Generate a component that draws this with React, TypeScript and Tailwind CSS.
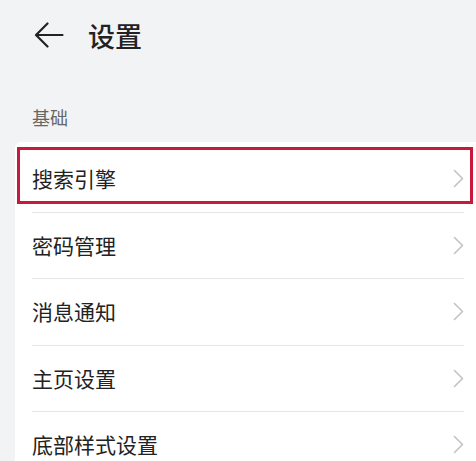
import React from 'react';

const items = ['搜索引擎', '密码管理', '消息通知', '主页设置', '底部样式设置'];

const Chevron = () => (
  <svg width="11" height="19" viewBox="0 0 11 19" fill="none">
    <polyline points="1.5,1.5 9.5,9.5 1.5,17.5" stroke="#c2c2c2" strokeWidth="1.6" strokeLinecap="round" strokeLinejoin="round" />
  </svg>
);

const BackArrow = () => (
  <svg width="30" height="26" viewBox="0 0 30 26" fill="none">
    <path d="M28.5 13H2.5M13.5 1.5L2 13l11.5 11.5" stroke="#222" strokeWidth="2.2" strokeLinecap="round" strokeLinejoin="round" />
  </svg>
);

export default function App() {
  return (
    <div
      className="w-full h-[461px] overflow-hidden bg-[#f1f3f5]"
      style={{ fontFamily: '"Noto Sans CJK SC", "Noto Sans", sans-serif' }}
    >
      {/* header */}
      <div className="flex items-center h-[70px] pl-[34px] gap-[24px]">
        <BackArrow />
        <span className="text-[27px] font-medium text-[#222] leading-none">设置</span>
      </div>

      <div className="pl-[32px] pt-[34px] pb-[12px] text-[18px] leading-[26px] text-[#666]">基础</div>

      <div className="ml-[15px] bg-white rounded-tl-[6px] pt-[4px]">
        {items.map((label, i) => (
          <div key={label} className="relative">
            {i === 0 && (
              <div className="absolute left-[2px] right-[3px] top-[1px] h-[57px] border-[3px] border-[#c8193c] pointer-events-none" />
            )}
            <div className="ml-[17px] mr-[12px] h-[66.5px] flex items-center justify-between border-b border-[#e6e6e6]">
              <span className="text-[21px] text-[#222]">{label}</span>
              <Chevron />
            </div>
          </div>
        ))}
      </div>
    </div>
  );
}
